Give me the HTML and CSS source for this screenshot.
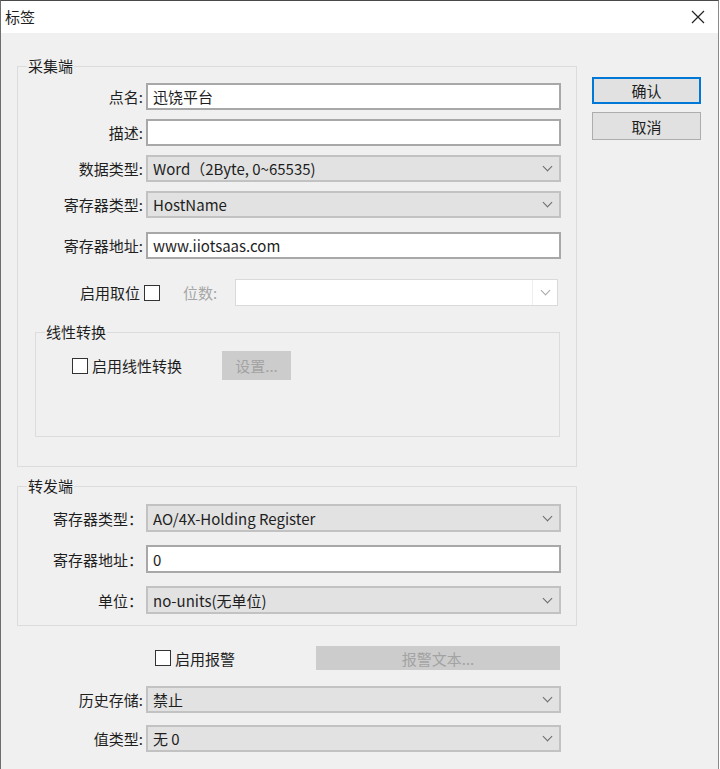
FILE: index.html
```html
<!DOCTYPE html>
<html lang="zh-CN">
<head>
  <meta charset="UTF-8" />
  <title>标签</title>
  <link rel="stylesheet" href="styles.css">
</head>
<body>
  <div class="window">
    <div class="titlebar">
      <span class="title">标签</span>
      <svg class="close" width="14" height="14" viewBox="0 0 14 14">
        <path d="M1 1 L13 13 M13 1 L1 13" stroke="#222" stroke-width="1.2" fill="none" />
      </svg>
    </div>

    <div class="dialog">
      <div class="form">

        <!-- 采集端 -->
        <fieldset class="group group-collect">
          <legend>采集端</legend>
          <div class="rows">
            <div class="row">
              <label class="label">点名:</label>
              <div class="field input">迅饶平台</div>
            </div>
            <div class="row">
              <label class="label">描述:</label>
              <div class="field input"></div>
            </div>
            <div class="row">
              <label class="label">数据类型:</label>
              <div class="field select"><span>Word（2Byte, 0~65535)</span><i class="chevron"></i></div>
            </div>
            <div class="row">
              <label class="label">寄存器类型:</label>
              <div class="field select"><span>HostName</span><i class="chevron"></i></div>
            </div>
            <div class="row">
              <label class="label">寄存器地址:</label>
              <div class="field input">www.iiotsaas.com</div>
            </div>
          </div>

          <div class="bit-row">
            <label class="bit-label">启用取位</label>
            <span class="checkbox"></span>
            <span class="bit-count">位数:</span>
            <div class="combo-disabled"><span class="combo-arrow"><i class="chevron light"></i></span></div>
          </div>

          <fieldset class="subgroup">
            <legend>线性转换</legend>
            <div class="linear-row">
              <span class="checkbox"></span>
              <span class="check-text">启用线性转换</span>
              <button class="btn-disabled btn-setup">设置...</button>
            </div>
          </fieldset>
        </fieldset>

        <!-- 转发端 -->
        <fieldset class="group group-forward">
          <legend>转发端</legend>
          <div class="rows">
            <div class="row">
              <label class="label">寄存器类型：</label>
              <div class="field select"><span>AO/4X-Holding Register</span><i class="chevron"></i></div>
            </div>
            <div class="row">
              <label class="label">寄存器地址：</label>
              <div class="field input">0</div>
            </div>
            <div class="row">
              <label class="label">单位：</label>
              <div class="field select"><span>no-units(无单位)</span><i class="chevron"></i></div>
            </div>
          </div>
        </fieldset>

        <div class="alarm-row">
          <span class="checkbox"></span>
          <span class="check-text">启用报警</span>
          <button class="btn-disabled btn-alarm">报警文本...</button>
        </div>

        <div class="rows rows-bottom">
          <div class="row">
            <label class="label">历史存储:</label>
            <div class="field select"><span>禁止</span><i class="chevron"></i></div>
          </div>
          <div class="row">
            <label class="label">值类型:</label>
            <div class="field select"><span>无 0</span><i class="chevron"></i></div>
          </div>
        </div>
      </div>

      <div class="actions">
        <button class="btn btn-default">确认</button>
        <button class="btn">取消</button>
      </div>
    </div>
  </div>
</body>
</html>
```

FILE: styles.css
```css
* {
  box-sizing: border-box;
  margin: 0;
  padding: 0;
}
html, body {
  width: 100%;
  height: 100%;
  background-color: #ffffff;
  overflow: hidden;
}
body {
  font-family: "Noto Sans CJK SC", "Noto Sans", sans-serif;
  font-size: 15px;
  color: #1e1e1e;
}
.window {
  width: 719px;
  height: 100%;
  border-top: 1px solid #4a4a4a;
  border-left: 1px solid #6e6e6e;
  border-right: 1px solid #8a8a8a;
  background-color: #f0f0f0;
}
.titlebar {
  height: 32px;
  background-color: #ffffff;
  display: flex;
  align-items: center;
  justify-content: space-between;
  padding: 0 13px 0 4px;
}
.title {
  font-size: 15px;
  line-height: 20px;
}
.dialog {
  display: flex;
  align-items: flex-start;
  padding: 23px 0 0 16px;
}
.form {
  width: 560px;
}

/* --- group boxes --- */
.group {
  border: 1px solid #dcdcdc;
  padding: 0;
}
.group legend,
.subgroup legend {
  line-height: 20px;
  margin-left: 9px;
  padding: 0 1px;
}
.group-collect {
  padding: 7px 0 29px 0;
}
.group-forward {
  margin-top: 9px;
  padding: 8px 0 11px 0;
}
.rows {
  display: flex;
  flex-direction: column;
  gap: 10px;
}
.group-collect .rows {
  gap: 9px;
}
.group-collect .row:last-child {
  margin-top: 5px;
}
.group-forward .rows {
  gap: 13px;
}
.group-forward .field {
  height: 28px;
}
.row {
  display: flex;
  align-items: center;
}
.label {
  width: 125px;
  text-align: right;
  white-space: nowrap;
}
.rows-bottom {
  gap: 12px;
  margin-top: 16px;
}
.rows-bottom .label {
  width: 126px;
}

/* --- inputs and selects --- */
.field {
  margin-left: 3px;
  width: 415px;
  height: 27px;
  display: flex;
  align-items: center;
  padding-left: 5px;
  white-space: nowrap;
}
.input {
  background-color: #ffffff;
  border: 2px solid #a8a8a8;
}
.select {
  background-color: #e2e2e2;
  border: 2px solid #c2c2c2;
  justify-content: space-between;
  padding-right: 8px;
}
.chevron {
  display: block;
  width: 7px;
  height: 7px;
  border-right: 1.5px solid #6a6a6a;
  border-bottom: 1.5px solid #6a6a6a;
  transform: translateY(-2px) rotate(45deg);
}
.chevron.light {
  border-color: #a8a8a8;
}

/* --- bit row --- */
.bit-row {
  display: flex;
  align-items: center;
  margin-top: 20px;
  height: 27px;
}
.bit-label {
  width: 122px;
  text-align: right;
}
.bit-row .checkbox {
  margin-left: 4px;
}
.bit-count {
  margin-left: 23px;
  color: #a6a6a6;
}
.combo-disabled {
  margin-left: 18px;
  width: 323px;
  height: 27px;
  background-color: #ffffff;
  border: 1px solid #dadada;
  display: flex;
  justify-content: flex-end;
}
.combo-arrow {
  width: 25px;
  border-left: 1px solid #eeeeee;
  display: flex;
  align-items: center;
  justify-content: center;
}

.checkbox {
  display: inline-block;
  width: 16px;
  height: 16px;
  background-color: #ffffff;
  border: 1.5px solid #333333;
  flex-shrink: 0;
}
.check-text {
  margin-left: 4px;
}

/* --- linear conversion --- */
.subgroup {
  margin: 16px 0 0 17px;
  width: 525px;
  border: 1px solid #dcdcdc;
  padding: 9px 0 56px 0;
}
.linear-row {
  display: flex;
  align-items: center;
  padding-left: 36px;
  height: 29px;
}
.btn-disabled {
  font-family: inherit;
  font-size: 15px;
  color: #a3a3a3;
  background-color: #cccccc;
  border: none;
}
.btn-setup {
  margin-left: 40px;
  width: 69px;
  height: 29px;
}

/* --- alarm row --- */
.alarm-row {
  display: flex;
  align-items: center;
  margin-top: 20px;
  width: 543px;
  height: 24px;
  padding-left: 138px;
}
.btn-alarm {
  margin-left: auto;
  width: 244px;
  height: 24px;
}

/* --- dialog buttons --- */
.actions {
  margin-left: 15px;
  padding-top: 21px;
  display: flex;
  flex-direction: column;
  gap: 8px;
}
.btn {
  width: 109px;
  height: 28px;
  font-family: inherit;
  font-size: 15px;
  color: #1e1e1e;
  background-color: #e1e1e1;
  border: 1px solid #adadad;
}
.btn-default {
  height: 27px;
  border: 2px solid #0078d7;
}
```
